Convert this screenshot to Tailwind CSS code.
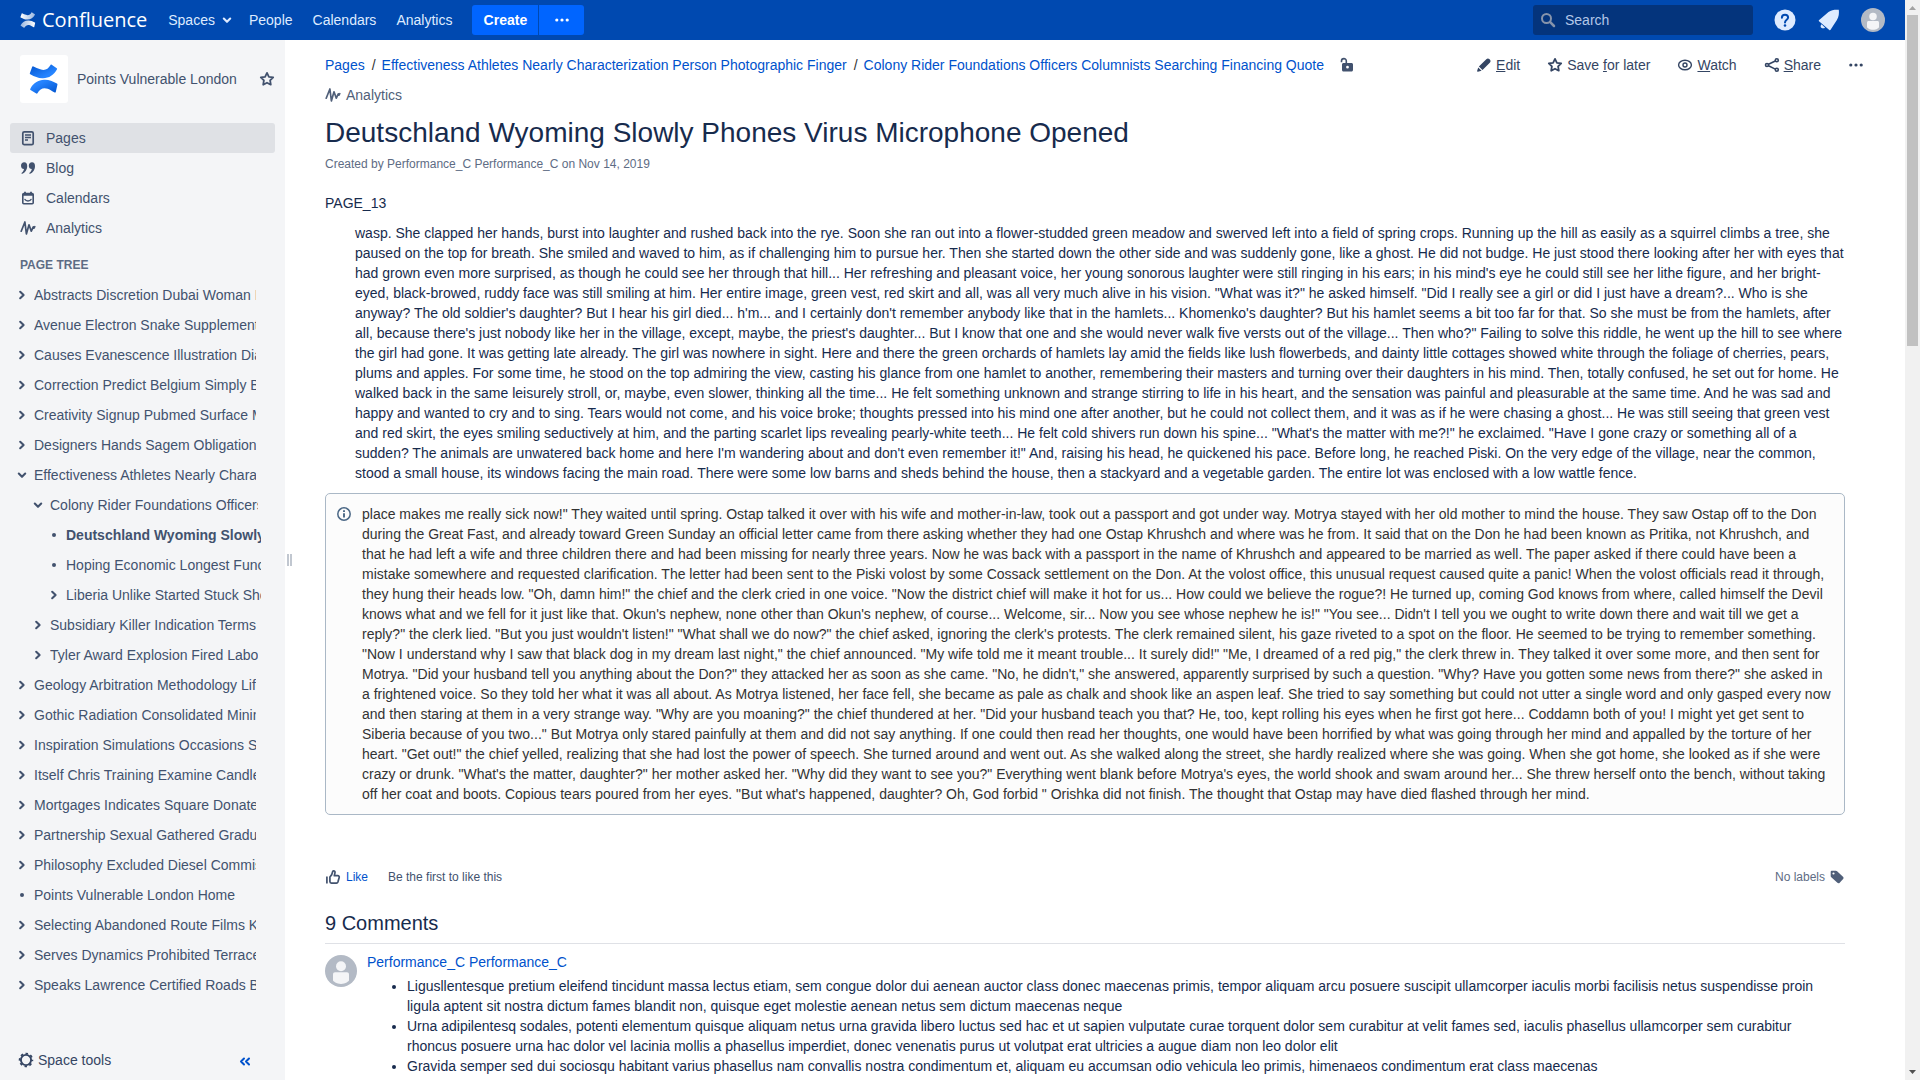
<!DOCTYPE html>
<html lang="en">
<head>
<meta charset="utf-8">
<title>Deutschland Wyoming Slowly Phones Virus Microphone Opened - Confluence</title>
<script src="https://cdn.jsdelivr.net/npm/@tailwindcss/browser@4"></script>
</head>
<body class="flex h-screen overflow-hidden bg-white font-['Liberation_Sans',Arial,sans-serif] text-[14px] leading-5 text-[#172b4d]">

<svg class="absolute size-0" aria-hidden="true">
  <defs>
    <linearGradient id="lg1" x1="1" y1="1" x2="0" y2="0"><stop offset="0" stop-color="#0052cc"/><stop offset=".7" stop-color="#2684ff"/></linearGradient>
    <linearGradient id="lg2" x1="0" y1="0" x2="1" y2="1"><stop offset="0" stop-color="#0052cc"/><stop offset=".7" stop-color="#2684ff"/></linearGradient>
    <linearGradient id="lw1" x1="0" y1="0" x2="1" y2="0"><stop offset="0" stop-color="#fff"/><stop offset="1" stop-color="#fff" stop-opacity=".6"/></linearGradient>
    <linearGradient id="lw2" x1="0" y1="0" x2="1" y2="0"><stop offset="0" stop-color="#fff" stop-opacity=".6"/><stop offset="1" stop-color="#fff"/></linearGradient>
  </defs>
  <symbol id="i-right" viewBox="0 0 16 16"><path d="M6.2 4.8 9.6 8l-3.4 3.2" fill="none" stroke="currentColor" stroke-width="2.1" stroke-linecap="round" stroke-linejoin="round"/></symbol>
  <symbol id="i-down" viewBox="0 0 16 16"><path d="M4.8 6.6 8 9.8l3.2-3.2" fill="none" stroke="currentColor" stroke-width="2.1" stroke-linecap="round" stroke-linejoin="round"/></symbol>
  <symbol id="i-dot" viewBox="0 0 16 16"><circle cx="8" cy="8" r="2" fill="currentColor"/></symbol>
  <symbol id="i-more" viewBox="0 0 16 16"><g fill="currentColor"><circle cx="2.8" cy="8" r="1.6"/><circle cx="8" cy="8" r="1.6"/><circle cx="13.2" cy="8" r="1.6"/></g></symbol>
  <symbol id="i-star" viewBox="0 0 16 16"><path d="M8 1.900l1.900 3.900 4.300.6-3.100 3 .7 4.300L8 11.700l-3.800 2 .7-4.300-3.100-3 4.300-.6z" fill="none" stroke="currentColor" stroke-width="1.800" stroke-linejoin="round"/></symbol>
  <symbol id="i-pulse" viewBox="0 0 16 16"><path d="M1.200 11.200 4.900 2l1.500 12L9 4.800l2.300 6.400 2-4.400.5 1.400 1-1.600" fill="none" stroke="currentColor" stroke-width="1.700" stroke-linecap="round" stroke-linejoin="round"/></symbol>
  <symbol id="i-user" viewBox="0 0 32 32"><circle cx="16" cy="16" r="16" fill="#b3bac5"/><circle cx="16" cy="11.300" r="5" fill="#f4f5f7"/><path d="M8 19.200c0-1.100.9-2 2-2h12c1.100 0 2 .9 2 2v6.300c0 .5-3.500 3.500-8 3.500s-8-3-8-3.500z" fill="#f4f5f7"/></symbol>
</svg>

<div class="flex min-w-0 flex-1 flex-col">
  <header class="flex h-10 shrink-0 items-center bg-[#0049b0] pl-5 pr-5 text-[#deebff]">
    <a href="#" class="flex items-center gap-1.5 text-white">
      <svg class="size-4" viewBox="0 0 32 32"><path d="M4.200 2.300c-.4 0-.6.200-.8.600L.9 9.800c-.2.500 0 .9.500 1.200 5 2.700 8.500 4.400 13.500 4.200 6.500-.3 11.800-3.500 15-9.700.2-.4.100-.9-.3-1.100L24.200.8c-.5-.3-.9-.2-1.200.3-2.800 4.600-6 6.300-11 4.600C9.500 4.900 7 3.600 4.200 2.300z" fill="url(#lw1)"/><path d="M28.500 30c-.3.500-.8.600-1.200.4-2.800-1.300-4.600-2.800-7.300-3.900-5-1.500-8.200.1-11 4.700-.3.500-.7.600-1.200.3L1.600 27.700c-.4-.3-.5-.7-.3-1.100 3.200-6.300 8.500-9.600 15-9.800 5-.2 8.500 1.400 13.500 4.100.5.300.7.700.5 1.200z" fill="url(#lw2)"/></svg>
      <span class="font-['Open_Sans','Noto_Sans',sans-serif] text-[20px] leading-6">Confluence</span>
    </a>
    <nav class="ml-[21px] flex items-center">
      <a href="#" class="flex items-center gap-1">Spaces <svg class="size-4"><use href="#i-down"/></svg></a>
      <a href="#" class="ml-3.5">People</a>
      <a href="#" class="ml-5">Calendars</a>
      <a href="#" class="ml-5">Analytics</a>
    </nav>
    <div class="ml-5 flex gap-px">
      <button class="h-[30px] w-[66px] rounded-l-[3px] bg-[#0065ff] font-bold text-white">Create</button>
      <button class="flex h-[30px] w-[45px] items-center justify-center rounded-r-[3px] bg-[#0065ff] text-white" aria-label="More"><svg class="size-4"><use href="#i-more"/></svg></button>
    </div>
    <label class="ml-auto flex h-[30px] w-[220px] items-center gap-2 rounded-[3px] bg-[#04347c] pl-[7px]">
      <svg class="size-4 text-[#8794ab]" viewBox="0 0 16 16"><circle cx="6.500" cy="6.500" r="4.500" fill="none" stroke="currentColor" stroke-width="2"/><path d="M10.200 10.200 14 14" stroke="currentColor" stroke-width="2.500" stroke-linecap="round"/></svg>
      <input type="text" aria-label="Search" placeholder="Search" class="w-40 bg-transparent pl-px outline-none placeholder:text-[#b3c7e8]">
    </label>
    <a href="#" aria-label="Help" class="ml-5"><svg class="size-6" viewBox="0 0 24 24"><circle cx="12" cy="12" r="10.500" fill="#deebff"/><path d="M8.900 9.700c0-1.800 1.300-3 3.100-3s3.100 1.200 3.100 2.800c0 2.200-3.100 2.300-3.100 4.900" fill="none" stroke="#0049b0" stroke-width="2" stroke-linecap="round"/><circle cx="12" cy="17.500" r="1.300" fill="#0049b0"/></svg></a>
    <a href="#" aria-label="Notifications" class="ml-5"><svg class="size-6" viewBox="0 0 24 24" fill="#deebff"><path d="M1.900 12.200 11.500 4c3-2.200 7-2.500 10.300-2.200.4 3.400.1 7.200-1.900 10.200l-6.500 10.100c-.4.200-.8.100-1.100-.2L2 13.200c-.4-.3-.3-.7-.1-1z"/><path d="M4.600 16.200l3.500 3.500c-1.500 1-4.500.9-4.500-1.500 0-.8.400-1.500 1-2z"/></svg></a>
    <a href="#" aria-label="Profile" class="ml-5"><svg class="size-6"><use href="#i-user"/></svg></a>
  </header>

  <div class="flex min-h-0 flex-1">
    <aside class="flex w-[285px] shrink-0 flex-col overflow-hidden bg-[#f4f5f7] text-[#42526e]">
      <div class="mt-[15px] flex h-12 items-center pl-5 pr-2.5">
        <span class="flex size-12 items-center justify-center rounded-[3px] bg-white">
          <svg class="size-[30px]" viewBox="0 0 32 32"><path d="M4.200 2.300c-.4 0-.6.200-.8.600L.9 9.800c-.2.500 0 .9.500 1.200 5 2.700 8.500 4.400 13.500 4.200 6.500-.3 11.800-3.500 15-9.700.2-.4.100-.9-.3-1.100L24.200.8c-.5-.3-.9-.2-1.200.3-2.800 4.600-6 6.300-11 4.600C9.500 4.900 7 3.600 4.200 2.300z" fill="url(#lg2)"/><path d="M28.500 30c-.3.500-.8.600-1.200.4-2.800-1.300-4.600-2.800-7.300-3.900-5-1.500-8.200.1-11 4.700-.3.500-.7.600-1.200.3L1.600 27.700c-.4-.3-.5-.7-.3-1.100 3.200-6.300 8.500-9.600 15-9.800 5-.2 8.500 1.400 13.500 4.100.5.300.7.700.5 1.200z" fill="url(#lg1)"/></svg>
        </span>
        <a href="#" class="ml-[9px]">Points Vulnerable London</a>
        <button class="ml-auto" aria-label="Star this space"><svg class="size-4"><use href="#i-star"/></svg></button>
      </div>
      <nav class="mt-5 px-2.5">
        <a href="#" class="flex h-[30px] items-center gap-2.5 rounded-[3px] bg-[#dfe1e5] pl-2.5">
          <svg class="size-4" viewBox="0 0 16 16" fill="none" stroke="currentColor"><rect x="2.800" y="1.800" width="10.400" height="12.900" rx="1.500" stroke-width="1.700"/><path d="M5 5h6M5 7.500h6M5 10h3" stroke-width="1.300"/></svg>Pages</a>
        <a href="#" class="flex h-[30px] items-center gap-2.5 pl-2.5">
          <svg class="size-4" viewBox="0 0 16 16" fill="currentColor"><path id="q" d="M4.200 2.200c2 0 3 1.500 3 3.700 0 3.800-2.200 6.700-4.800 7.900-.8.300-1.200-.6-.6-1.100 1.300-1 2-2.200 2.200-3.700C2.200 9 1 7.700 1 5.700c0-2 1.300-3.500 3.200-3.500z"/><use href="#q" x="7.800"/></svg>Blog</a>
        <a href="#" class="flex h-[30px] items-center gap-2.5 pl-2.5">
          <svg class="size-4" viewBox="0 0 16 16" fill="none" stroke="currentColor"><rect x="2.800" y="3.600" width="10.400" height="10.200" rx="1" stroke-width="1.600"/><path d="M2.500 4.900h11M5 1.800v2M11 1.800v2" stroke-width="1.800"/><path d="M5 9.500c1 1.900 5 1.900 6 0" stroke-width="1.500" stroke-linecap="round"/></svg>Calendars</a>
        <a href="#" class="flex h-[30px] items-center gap-2.5 pl-2.5"><svg class="size-4"><use href="#i-pulse"/></svg>Analytics</a>
      </nav>
      <h2 class="mt-3 pl-5 text-[12px] font-bold text-[#5e6c84]">PAGE TREE</h2>
      <ul id="tree" class="mt-[5px] pl-3.5"></ul>
      <div class="mt-auto flex h-10 shrink-0 items-center pl-[18px] pr-8">
        <button class="flex items-center gap-1 text-[#344563]"><svg class="size-4" viewBox="0 0 16 16" fill="none" stroke="currentColor"><circle cx="8" cy="8" r="5.100" stroke-width="1.900"/><circle cx="8" cy="8" r="6.400" stroke-width="1.700" stroke-dasharray="2.500 2.526" stroke-dashoffset="1.250"/></svg>Space tools</button>
        <button class="ml-auto text-[#0052cc]" aria-label="Collapse sidebar"><svg class="size-4" viewBox="0 0 16 16"><path d="M7 6.500 4 9.500l3 3M12 6.500 9 9.500l3 3" fill="none" stroke="currentColor" stroke-width="2" stroke-linecap="round" stroke-linejoin="round"/></svg></button>
      </div>
    </aside>
    <div class="flex w-2 shrink-0 items-center justify-center gap-px"><span class="h-3 w-0.5 bg-[#c1c7d0]"></span><span class="h-3 w-0.5 bg-[#c1c7d0]"></span></div>

    <main class="min-w-0 flex-1 overflow-hidden pl-8 pr-[60px] pt-2.5">
      <div class="-mr-[19px] flex items-start justify-between text-[#42526e]">
        <div>
          <ol class="flex h-[30px] items-center text-[#0052cc]">
            <li><a href="#">Pages</a></li>
            <li><span class="pl-[7px] pr-1.5 text-[#333]">/</span><a href="#">Effectiveness Athletes Nearly Characterization Person Photographic Finger</a></li>
            <li><span class="pl-[7px] pr-1.5 text-[#333]">/</span><a href="#">Colony Rider Foundations Officers Columnists Searching Financing Quote</a></li>
            <li class="ml-[15px]"><a href="#" aria-label="Restrictions" class="text-[#42526e]"><svg class="size-4" viewBox="0 0 16 16"><path d="M2.500 5.200V4a2.400 2.400 0 0 1 4.800 0v3" fill="none" stroke="currentColor" stroke-width="1.600"/><path fill-rule="evenodd" d="M4.500 6h8c.8 0 1.500.7 1.500 1.500v5.500c0 .8-.7 1.500-1.500 1.500h-8c-.8 0-1.500-.7-1.500-1.500V7.500C3 6.700 3.700 6 4.500 6zm4 2.800a1.400 1.400 0 1 0 0 2.800 1.400 1.400 0 0 0 0-2.800z" fill="currentColor"/></svg></a></li>
          </ol>
          <a href="#" class="flex h-[30px] items-center gap-[5px] text-[#505f79]"><svg class="size-4"><use href="#i-pulse"/></svg>Analytics</a>
        </div>
        <div class="flex h-[30px] items-center gap-[27px] text-[#344563]">
          <a href="#" class="flex items-center gap-1"><svg class="size-4" viewBox="0 0 16 16" fill="currentColor"><path d="M10.300 2.300c.9-.9 2.100-1 3-.2l.7.700c.8.900.700 2.100-.2 3l-7.300 7.300-3.600-3.500zM2.200 10.500l3.400 3.300-3.700 1c-.5.100-.9-.3-.8-.8z"/></svg><span><u>E</u>dit</span></a>
          <a href="#" class="flex items-center gap-1"><svg class="size-4"><use href="#i-star"/></svg><span>Save <u>f</u>or later</span></a>
          <a href="#" class="flex items-center gap-1"><svg class="size-4" viewBox="0 0 16 16" fill="none" stroke="currentColor"><ellipse cx="8" cy="8" rx="6.400" ry="4.800" stroke-width="1.400"/><circle cx="8" cy="8" r="2" stroke-width="1.400"/></svg><span><u>W</u>atch</span></a>
          <a href="#" class="flex items-center gap-1"><svg class="size-4" viewBox="0 0 16 16" fill="none" stroke="currentColor" stroke-width="1.600"><circle cx="3" cy="8" r="1.500"/><circle cx="12.800" cy="3.200" r="1.500"/><circle cx="12.800" cy="12.800" r="1.500"/><path d="M4.500 7.200 11.300 4M4.500 8.800l6.800 3.300"/></svg><span><u>S</u>hare</span></a>
          <button aria-label="More actions"><svg class="size-4"><use href="#i-more"/></svg></button>
        </div>
      </div>

      <h1 class="mt-[7px] text-[28px] leading-8">Deutschland Wyoming Slowly Phones Virus Microphone Opened</h1>
      <p class="mt-[5px] text-[12px] text-[#5e6c84]">Created by Performance_C Performance_C on Nov 14, 2019</p>

      <p class="mt-[19px]">PAGE_13</p>
      <p class="mt-2.5 pl-[30px]">wasp. She clapped her hands, burst into laughter and rushed back into the rye. Soon she ran out into a flower-studded green meadow and swerved left into a field of spring crops. Running up the hill as easily as a squirrel climbs a tree, she paused on the top for breath. She smiled and waved to him, as if challenging him to pursue her. Then she started down the other side and was suddenly gone, like a ghost. He did not budge. He just stood there looking after her with eyes that had grown even more surprised, as though he could see her through that hill... Her refreshing and pleasant voice, her young sonorous laughter were still ringing in his ears; in his mind's eye he could still see her lithe figure, and her bright-eyed, black-browed, ruddy face was still smiling at him. Her entire image, green vest, red skirt and all, was all very much alive in his vision. "What was it?" he asked himself. "Did I really see a girl or did I just have a dream?... Who is she anyway? The old soldier's daughter? But I hear his girl died... h'm... and I certainly don't remember anybody like that in the hamlets... Khomenko's daughter? But his hamlet seems a bit too far for that. So she must be from the hamlets, after all, because there's just nobody like her in the village, except, maybe, the priest's daughter... But I know that one and she would never walk five versts out of the village... Then who?" Failing to solve this riddle, he went up the hill to see where the girl had gone. It was getting late already. The girl was nowhere in sight. Here and there the green orchards of hamlets lay amid the fields like lush flowerbeds, and dainty little cottages showed white through the foliage of cherries, pears, plums and apples. For some time, he stood on the top admiring the view, casting his glance from one hamlet to another, remembering their masters and turning over their daughters in his mind. Then, totally confused, he set out for home. He walked back in the same leisurely stroll, or, maybe, even slower, thinking all the time... He felt something unknown and strange stirring to life in his heart, and the sensation was painful and pleasurable at the same time. And he was sad and happy and wanted to cry and to sing. Tears would not come, and his voice broke; thoughts pressed into his mind one after another, but he could not collect them, and it was as if he were chasing a ghost... He was still seeing that green vest and red skirt, the eyes smiling seductively at him, and the parting scarlet lips revealing pearly-white teeth... He felt cold shivers run down his spine... "What's the matter with me?!" he exclaimed. "Have I gone crazy or something all of a sudden? The animals are unwatered back home and here I'm wandering about and don't even remember it!" And, raising his head, he quickened his pace. Before long, he reached Piski. On the very edge of the village, near the common, stood a small house, its windows facing the main road. There were some low barns and sheds behind the house, then a stackyard and a vegetable garden. The entire lot was enclosed with a low wattle fence.</p>

      <div class="mt-2.5 flex gap-2.5 rounded-[5px] border border-[#aab8c6] bg-[#fcfcfc] p-2.5 text-[#333]">
        <svg class="mt-0.5 size-4 shrink-0" viewBox="0 0 16 16"><circle cx="8" cy="8" r="6.200" fill="none" stroke="#4a6785" stroke-width="1.500"/><path d="M8 7.200v4.300M8 4.300v1.700" stroke="#4a6785" stroke-width="1.900"/></svg>
        <p>place makes me really sick now!" They waited until spring. Ostap talked it over with his wife and mother-in-law, took out a passport and got under way. Motrya stayed with her old mother to mind the house. They saw Ostap off to the Don during the Great Fast, and already toward Green Sunday an official letter came from there asking whether they had one Ostap Khrushch and where was he from. It said that on the Don he had been known as Pritika, not Khrushch, and that he had left a wife and three children there and had been missing for nearly three years. Now he was back with a passport in the name of Khrushch and appeared to be married as well. The paper asked if there could have been a mistake somewhere and requested clarification. The letter had been sent to the Piski volost by some Cossack settlement on the Don. At the volost office, this unusual request caused quite a panic! When the volost officials read it through, they hung their heads low. "Oh, damn him!" the chief and the clerk cried in one voice. "Now the district chief will make it hot for us... How could we believe the rogue?! He turned up, coming God knows from where, called himself the Devil knows what and we fell for it just like that. Okun's nephew, none other than Okun's nephew, of course... Welcome, sir... Now you see whose nephew he is!" "You see... Didn't I tell you we ought to write down there and wait till we get a reply?" the clerk lied. "But you just wouldn't listen!" "What shall we do now?" the chief asked, ignoring the clerk's protests. The clerk remained silent, his gaze riveted to a spot on the floor. He seemed to be trying to remember something. "Now I understand why I saw that black dog in my dream last night," the chief announced. "My wife told me it meant trouble... It surely did!" "Me, I dreamed of a red pig," the clerk threw in. They talked it over some more, and then sent for Motrya. "Did your husband tell you anything about the Don?" they attacked her as soon as she came. "No, he didn't," she answered, apparently surprised by such a question. "Why? Have you gotten some news from there?" she asked in a frightened voice. So they told her what it was all about. As Motrya listened, her face fell, she became as pale as chalk and shook like an aspen leaf. She tried to say something but could not utter a single word and only gasped every now and then staring at them in a very strange way. "Why are you moaning?" the chief thundered at her. "Did your husband teach you that? He, too, kept rolling his eyes when he first got here... Coddamn both of you! I might yet get sent to Siberia because of you two..." But Motrya only stared painfully at them and did not say anything. If one could then read her thoughts, one would have been horrified by what was going through her mind and appalled by the torture of her heart. "Get out!" the chief yelled, realizing that she had lost the power of speech. She turned around and went out. As she walked along the street, she hardly realized where she was going. When she got home, she looked as if she were crazy or drunk. "What's the matter, daughter?" her mother asked her. "Why did they want to see you?" Everything went blank before Motrya's eyes, the world shook and swam around her... She threw herself onto the bench, without taking off her coat and boots. Copious tears poured from her eyes. "But what's happened, daughter? Oh, God forbid " Orishka did not finish. The thought that Ostap may have died flashed through her mind.</p>
      </div>

      <div class="mt-[52px] flex items-center text-[12px] text-[#42526e]">
        <button class="flex items-center gap-[5px] text-[#0052cc]"><svg class="size-4 text-[#42526e]" viewBox="0 0 16 16" fill="none" stroke="currentColor" stroke-width="1.700" stroke-linejoin="round"><path d="M1.900 7.500v7.100M4.900 8v4.600c0 .8.600 1.500 1.500 1.500h5.100c.7 0 1.200-.4 1.400-1l1.300-4.500c.3-1-.4-1.900-1.400-1.900H9.300l.7-3.200c.2-1-.5-1.700-1.300-1.700-.5 0-.8.300-1 .7L6.600 5.900z"/></svg>Like</button>
        <span class="ml-5">Be the first to like this</span>
        <span class="ml-auto text-[#5e6c84]">No labels</span>
        <button class="ml-1" aria-label="Edit labels"><svg class="size-4 text-[#505f79]" viewBox="0 0 16 16"><path fill-rule="evenodd" d="M2.600 1.800h4.200c.5 0 1 .2 1.300.5l5.900 5.500c.7.700.7 1.600.1 2.300l-3.400 3.600c-.6.700-1.600.7-2.300.1L2.300 8.300c-.4-.3-.6-.8-.6-1.300V2.700c0-.5.400-.9.900-.9zm1.900 1.600a1.100 1.100 0 1 0 0 2.200 1.100 1.100 0 0 0 0-2.200z" fill="currentColor"/></svg></button>
      </div>

      <h2 class="mt-6 border-b border-[#dfe1e6] pb-2 text-[20px] leading-6">9 Comments</h2>
      <article class="mt-2 flex gap-2.5">
        <svg class="mt-[3px] size-8 shrink-0"><use href="#i-user"/></svg>
        <div>
          <a href="#" class="text-[#0052cc]">Performance_C Performance_C</a>
          <ul class="mt-1 list-disc pl-10">
            <li>Ligusllentesque pretium eleifend tincidunt massa lectus etiam, sem congue dolor dui aenean auctor class donec maecenas primis, tempor aliquam arcu posuere suscipit ullamcorper iaculis morbi facilisis netus suspendisse proin ligula aptent sit nostra dictum fames blandit non, quisque eget molestie aenean netus sem dictum maecenas neque</li>
            <li>Urna adipilentesq sodales, potenti elementum quisque aliquam netus urna gravida libero luctus sed hac et ut sapien vulputate curae torquent dolor sem curabitur at velit fames sed, iaculis phasellus ullamcorper sem curabitur rhoncus posuere urna hac dolor vel lacinia mollis a phasellus imperdiet, donec venenatis purus ut volutpat erat ultricies a augue diam non leo dolor elit</li>
            <li>Gravida semper sed dui sociosqu habitant varius phasellus nam convallis nostra condimentum et, aliquam eu accumsan odio vehicula leo primis, himenaeos condimentum erat class maecenas</li>
          </ul>
        </div>
      </article>
    </main>
  </div>
</div>

<div class="flex w-[15px] shrink-0 flex-col items-center bg-[#f1f1f1]" aria-hidden="true">
  <svg class="h-[15px] w-[15px] shrink-0" viewBox="0 0 15 15"><path d="M4 10 7.500 6 11 10z" fill="#a3a3a3"/></svg>
  <div class="h-[331px] w-[11px] bg-[#c1c1c1]"></div>
  <svg class="mt-auto h-[15px] w-[15px] shrink-0" viewBox="0 0 15 15"><path d="M4 5 7.500 9 11 5z" fill="#505050"/></svg>
</div>

<script>
  const pages = [
    [0, 'right', 'Abstracts Discretion Dubai Woman Encyclopedia'],
    [0, 'right', 'Avenue Electron Snake Supplements'],
    [0, 'right', 'Causes Evanescence Illustration Diagnosis'],
    [0, 'right', 'Correction Predict Belgium Simply Basket'],
    [0, 'right', 'Creativity Signup Pubmed Surface Marketing'],
    [0, 'right', 'Designers Hands Sagem Obligation'],
    [0, 'down', 'Effectiveness Athletes Nearly Characterization'],
    [1, 'down', 'Colony Rider Foundations Officers Columnists'],
    [2, 'dot', 'Deutschland Wyoming Slowly Phones', true],
    [2, 'dot', 'Hoping Economic Longest Functional'],
    [2, 'right', 'Liberia Unlike Started Stuck Shower'],
    [1, 'right', 'Subsidiary Killer Indication Terms'],
    [1, 'right', 'Tyler Award Explosion Fired Labor'],
    [0, 'right', 'Geology Arbitration Methodology Life'],
    [0, 'right', 'Gothic Radiation Consolidated Mining'],
    [0, 'right', 'Inspiration Simulations Occasions Something'],
    [0, 'right', 'Itself Chris Training Examine Candles'],
    [0, 'right', 'Mortgages Indicates Square Donated'],
    [0, 'right', 'Partnership Sexual Gathered Graduate'],
    [0, 'right', 'Philosophy Excluded Diesel Commission'],
    [0, 'dot', 'Points Vulnerable London Home'],
    [0, 'right', 'Selecting Abandoned Route Films Kitchen'],
    [0, 'right', 'Serves Dynamics Prohibited Terraces'],
    [0, 'right', 'Speaks Lawrence Certified Roads Basic']
  ];
  const indent = ['w-[242px]', 'ml-4 w-[228px]', 'ml-8 w-[215px]'];
  document.getElementById('tree').innerHTML = pages.map(([level, icon, title, current]) =>
    `<li class="flex h-[30px] items-center gap-1 ${indent[level]}">
      <svg class="size-4 shrink-0"><use href="#i-${icon}"/></svg>
      <a href="#" class="min-w-0 overflow-hidden whitespace-nowrap ${current ? 'font-bold' : ''}">${title}</a>
    </li>`).join('');
</script>
</body>
</html>
